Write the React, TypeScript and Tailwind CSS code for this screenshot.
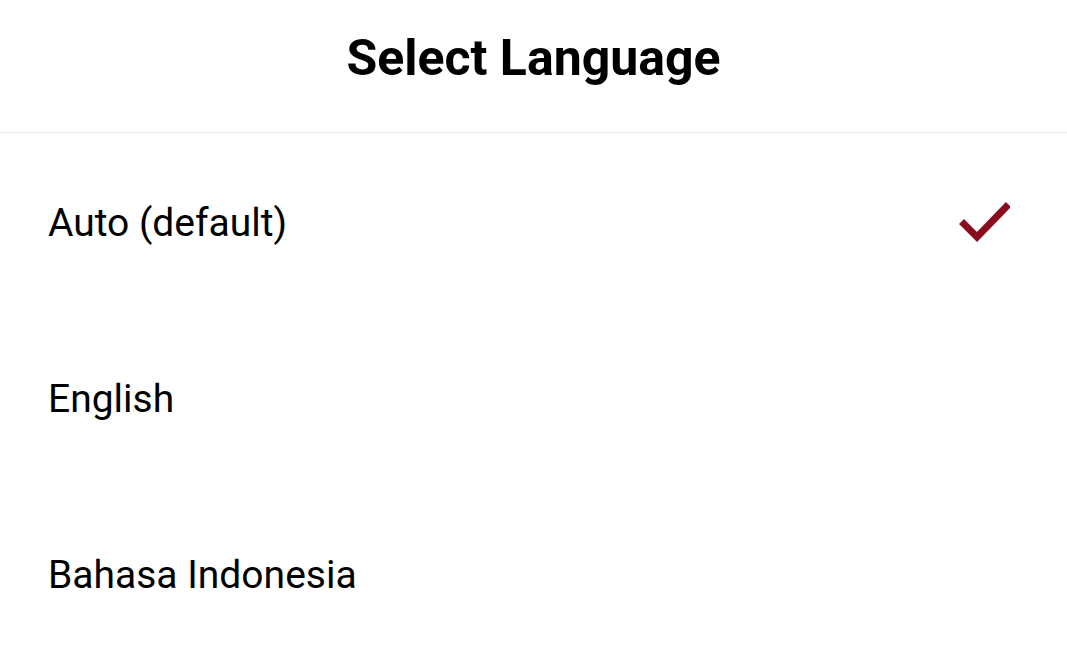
import React, { useState } from 'react';

const idiomas = ['Auto (default)', 'English', 'Bahasa Indonesia'];

const Check: React.FC = () => (
  <svg width="52" height="42" viewBox="0 0 52 42" fill="none">
    <path d="M6 24 L19 37 L48 7" stroke="#8a0c1f" strokeWidth="7" strokeLinecap="square" strokeLinejoin="miter" />
  </svg>
);

const App: React.FC = () => {
  const [selecionado, setSelecionado] = useState(0);

  return (
    <div className="min-h-screen w-full bg-white text-black" style={{ fontFamily: 'Roboto, "Noto Sans", sans-serif' }}>
      <div className="h-[133px] flex items-center justify-center border-b border-[#ececec] pb-[16px]">
        <h1 className="text-[50px] font-bold">Select Language</h1>
      </div>
      <div>
        {idiomas.map((idioma, index) => (
          <button
            key={idioma}
            onClick={() => setSelecionado(index)}
            className="w-full h-[176px] flex items-center justify-between pl-12 pr-[57px] text-left"
          >
            <span className="text-[39px] pt-[4px]">{idioma}</span>
            {selecionado === index && <Check />}
          </button>
        ))}
      </div>
    </div>
  );
};

export default App;
